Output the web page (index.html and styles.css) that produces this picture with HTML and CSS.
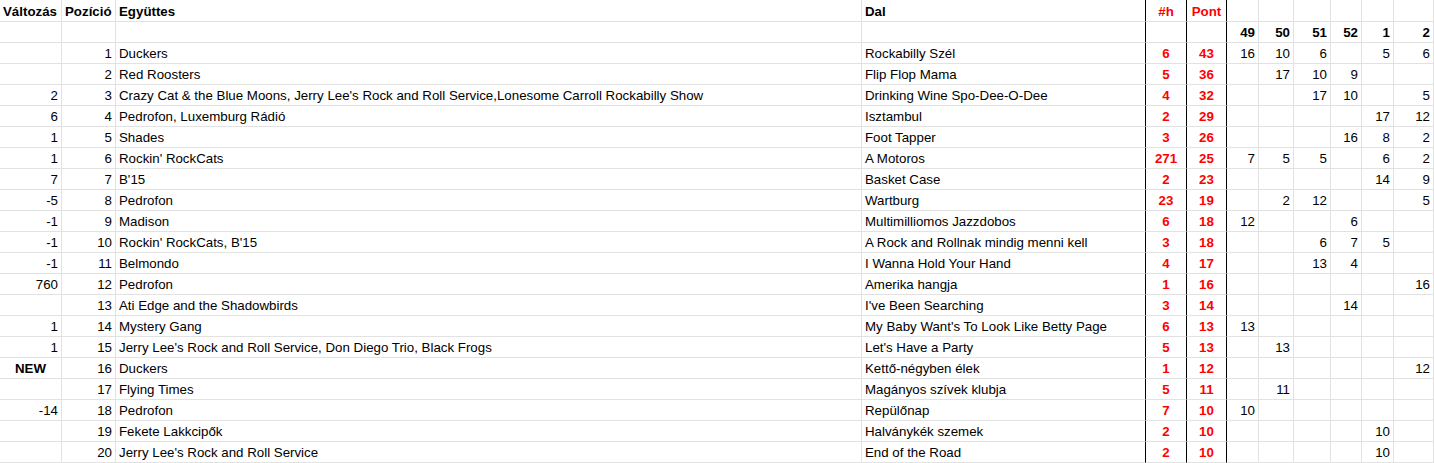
FILE: index.html
```html
<!DOCTYPE html>
<html lang="hu">
<head>
<meta charset="utf-8">
<title>Toplista</title>
<link rel="stylesheet" href="styles.css">
</head>
<body>
<div class="sheet">
  <div class="row head">
    <div class="c b">Változás</div><div class="c b">Pozíció</div><div class="c b">Együttes</div><div class="c b dk">Dal</div>
    <div class="c red ctr dk">#h</div><div class="c red ctr dk">Pont</div>
    <div class="c"></div><div class="c"></div><div class="c"></div><div class="c"></div><div class="c"></div><div class="c"></div>
  </div>
  <div class="row">
    <div class="c"></div><div class="c"></div><div class="c"></div><div class="c dk"></div>
    <div class="c dk"></div><div class="c dk"></div>
    <div class="c r b">49</div><div class="c r b">50</div><div class="c r b">51</div><div class="c r b">52</div><div class="c r b">1</div><div class="c r b">2</div>
  </div>
  <div class="row">
    <div class="c r"></div><div class="c r">1</div><div class="c">Duckers</div><div class="c dk">Rockabilly Szél</div>
    <div class="c red ctr dk">6</div><div class="c red ctr dk">43</div>
    <div class="c r">16</div><div class="c r">10</div><div class="c r">6</div><div class="c r"></div><div class="c r">5</div><div class="c r">6</div>
  </div>
  <div class="row">
    <div class="c r"></div><div class="c r">2</div><div class="c">Red Roosters</div><div class="c dk">Flip Flop Mama</div>
    <div class="c red ctr dk">5</div><div class="c red ctr dk">36</div>
    <div class="c r"></div><div class="c r">17</div><div class="c r">10</div><div class="c r">9</div><div class="c r"></div><div class="c r"></div>
  </div>
  <div class="row">
    <div class="c r">2</div><div class="c r">3</div><div class="c">Crazy Cat &amp; the Blue Moons, Jerry Lee's Rock and Roll Service,Lonesome Carroll Rockabilly Show</div><div class="c dk">Drinking Wine Spo-Dee-O-Dee</div>
    <div class="c red ctr dk">4</div><div class="c red ctr dk">32</div>
    <div class="c r"></div><div class="c r"></div><div class="c r">17</div><div class="c r">10</div><div class="c r"></div><div class="c r">5</div>
  </div>
  <div class="row">
    <div class="c r">6</div><div class="c r">4</div><div class="c">Pedrofon, Luxemburg Rádió</div><div class="c dk">Isztambul</div>
    <div class="c red ctr dk">2</div><div class="c red ctr dk">29</div>
    <div class="c r"></div><div class="c r"></div><div class="c r"></div><div class="c r"></div><div class="c r">17</div><div class="c r">12</div>
  </div>
  <div class="row">
    <div class="c r">1</div><div class="c r">5</div><div class="c">Shades</div><div class="c dk">Foot Tapper</div>
    <div class="c red ctr dk">3</div><div class="c red ctr dk">26</div>
    <div class="c r"></div><div class="c r"></div><div class="c r"></div><div class="c r">16</div><div class="c r">8</div><div class="c r">2</div>
  </div>
  <div class="row">
    <div class="c r">1</div><div class="c r">6</div><div class="c">Rockin' RockCats</div><div class="c dk">A Motoros</div>
    <div class="c red ctr dk">271</div><div class="c red ctr dk">25</div>
    <div class="c r">7</div><div class="c r">5</div><div class="c r">5</div><div class="c r"></div><div class="c r">6</div><div class="c r">2</div>
  </div>
  <div class="row">
    <div class="c r">7</div><div class="c r">7</div><div class="c">B'15</div><div class="c dk">Basket Case</div>
    <div class="c red ctr dk">2</div><div class="c red ctr dk">23</div>
    <div class="c r"></div><div class="c r"></div><div class="c r"></div><div class="c r"></div><div class="c r">14</div><div class="c r">9</div>
  </div>
  <div class="row">
    <div class="c r">-5</div><div class="c r">8</div><div class="c">Pedrofon</div><div class="c dk">Wartburg</div>
    <div class="c red ctr dk">23</div><div class="c red ctr dk">19</div>
    <div class="c r"></div><div class="c r">2</div><div class="c r">12</div><div class="c r"></div><div class="c r"></div><div class="c r">5</div>
  </div>
  <div class="row">
    <div class="c r">-1</div><div class="c r">9</div><div class="c">Madison</div><div class="c dk">Multimilliomos Jazzdobos</div>
    <div class="c red ctr dk">6</div><div class="c red ctr dk">18</div>
    <div class="c r">12</div><div class="c r"></div><div class="c r"></div><div class="c r">6</div><div class="c r"></div><div class="c r"></div>
  </div>
  <div class="row">
    <div class="c r">-1</div><div class="c r">10</div><div class="c">Rockin' RockCats, B'15</div><div class="c dk">A Rock and Rollnak mindig menni kell</div>
    <div class="c red ctr dk">3</div><div class="c red ctr dk">18</div>
    <div class="c r"></div><div class="c r"></div><div class="c r">6</div><div class="c r">7</div><div class="c r">5</div><div class="c r"></div>
  </div>
  <div class="row">
    <div class="c r">-1</div><div class="c r">11</div><div class="c">Belmondo</div><div class="c dk">I Wanna Hold Your Hand</div>
    <div class="c red ctr dk">4</div><div class="c red ctr dk">17</div>
    <div class="c r"></div><div class="c r"></div><div class="c r">13</div><div class="c r">4</div><div class="c r"></div><div class="c r"></div>
  </div>
  <div class="row">
    <div class="c r">760</div><div class="c r">12</div><div class="c">Pedrofon</div><div class="c dk">Amerika hangja</div>
    <div class="c red ctr dk">1</div><div class="c red ctr dk">16</div>
    <div class="c r"></div><div class="c r"></div><div class="c r"></div><div class="c r"></div><div class="c r"></div><div class="c r">16</div>
  </div>
  <div class="row">
    <div class="c r"></div><div class="c r">13</div><div class="c">Ati Edge and the Shadowbirds</div><div class="c dk">I've Been Searching</div>
    <div class="c red ctr dk">3</div><div class="c red ctr dk">14</div>
    <div class="c r"></div><div class="c r"></div><div class="c r"></div><div class="c r">14</div><div class="c r"></div><div class="c r"></div>
  </div>
  <div class="row">
    <div class="c r">1</div><div class="c r">14</div><div class="c">Mystery Gang</div><div class="c dk">My Baby Want's To Look Like Betty Page</div>
    <div class="c red ctr dk">6</div><div class="c red ctr dk">13</div>
    <div class="c r">13</div><div class="c r"></div><div class="c r"></div><div class="c r"></div><div class="c r"></div><div class="c r"></div>
  </div>
  <div class="row">
    <div class="c r">1</div><div class="c r">15</div><div class="c">Jerry Lee's Rock and Roll Service, Don Diego Trio, Black Frogs</div><div class="c dk">Let's Have a Party</div>
    <div class="c red ctr dk">5</div><div class="c red ctr dk">13</div>
    <div class="c r"></div><div class="c r">13</div><div class="c r"></div><div class="c r"></div><div class="c r"></div><div class="c r"></div>
  </div>
  <div class="row">
    <div class="c ctr b">NEW</div><div class="c r">16</div><div class="c">Duckers</div><div class="c dk">Kettő-négyben élek</div>
    <div class="c red ctr dk">1</div><div class="c red ctr dk">12</div>
    <div class="c r"></div><div class="c r"></div><div class="c r"></div><div class="c r"></div><div class="c r"></div><div class="c r">12</div>
  </div>
  <div class="row">
    <div class="c r"></div><div class="c r">17</div><div class="c">Flying Times</div><div class="c dk">Magányos szívek klubja</div>
    <div class="c red ctr dk">5</div><div class="c red ctr dk">11</div>
    <div class="c r"></div><div class="c r">11</div><div class="c r"></div><div class="c r"></div><div class="c r"></div><div class="c r"></div>
  </div>
  <div class="row">
    <div class="c r">-14</div><div class="c r">18</div><div class="c">Pedrofon</div><div class="c dk">Repülőnap</div>
    <div class="c red ctr dk">7</div><div class="c red ctr dk">10</div>
    <div class="c r">10</div><div class="c r"></div><div class="c r"></div><div class="c r"></div><div class="c r"></div><div class="c r"></div>
  </div>
  <div class="row">
    <div class="c r"></div><div class="c r">19</div><div class="c">Fekete Lakkcipők</div><div class="c dk">Halványkék szemek</div>
    <div class="c red ctr dk">2</div><div class="c red ctr dk">10</div>
    <div class="c r"></div><div class="c r"></div><div class="c r"></div><div class="c r"></div><div class="c r">10</div><div class="c r"></div>
  </div>
  <div class="row">
    <div class="c r"></div><div class="c r">20</div><div class="c">Jerry Lee's Rock and Roll Service</div><div class="c dk">End of the Road</div>
    <div class="c red ctr dk">2</div><div class="c red ctr dk">10</div>
    <div class="c r"></div><div class="c r"></div><div class="c r"></div><div class="c r"></div><div class="c r">10</div><div class="c r"></div>
  </div>
</div>
</body>
</html>
```

FILE: styles.css
```css
html, body { margin: 0; padding: 0; background: #fff; }
body { font-family: "Liberation Sans", Arial, sans-serif; font-size: 13.3px; color: #000; }
.sheet { width: 1434px; }
.row {
  display: grid;
  grid-template-columns: 62px 54px 746px 284px 41px 40px 32px 35px 37px 31px 32px 40px;
  height: 21px;
}
.row.head { height: 22px; }
.c {
  box-sizing: border-box;
  border-right: 1px solid #e2e2e2;
  border-bottom: 1px solid #e2e2e2;
  padding: 1px 3px 0;
  line-height: 20px;
  white-space: nowrap;
  overflow: hidden;
}
.head .c { padding-top: 2px; }
.dk { border-right-color: #000; }
.b { font-weight: bold; }
.r { text-align: right; }
.ctr { text-align: center; }
.red { color: #ff0000; font-weight: bold; }
```
